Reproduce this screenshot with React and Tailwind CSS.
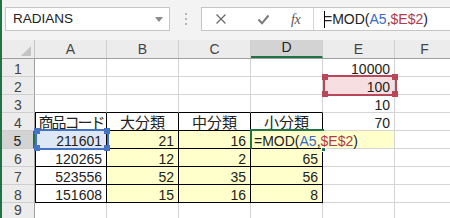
import React from 'react'

const COLS = ['A', 'B', 'C', 'D', 'E', 'F']

// row data: index 0 = row 1
const ROWS = [
  { E: '10000' },
  { E: '100' },
  { E: '10' },
  { A: '商品コード', B: '大分類', C: '中分類', D: '小分類', E: '70' },
  { A: '211601', B: '21', C: '16', D: '' },
  { A: '120265', B: '12', C: '2', D: '65' },
  { A: '523556', B: '52', C: '35', D: '56' },
  { A: '151608', B: '15', C: '16', D: '8' },
  {},
]

const TABLE = ['A', 'B', 'C', 'D']

function cellClass(r, col) {
  const inTable = r >= 4 && r <= 8 && TABLE.includes(col)
  const aboveTable = r === 3 && TABLE.includes(col)
  let cls = 'shrink-0 h-[18px] border-r border-b flex items-end leading-[14px] overflow-visible whitespace-nowrap '
  cls += col === 'F' ? 'w-[60px] ' : 'w-[72px] '
  if (inTable) cls += 'border-black '
  else if (aboveTable) cls += 'border-r-[#d4d4d4] border-b-black '
  else cls += 'border-[#d4d4d4] '
  if (inTable && col === 'A') cls += 'border-l border-l-black '
  if (r >= 5 && r <= 8 && (col === 'B' || col === 'C' || col === 'D')) cls += 'bg-[#ffffcc] '
  if (r === 5 && col === 'A') cls += 'bg-[#dde7f5] '
  if (r === 2 && col === 'E') cls += 'bg-[#f7dfe1] '
  if (r === 4 && col === 'A') cls += 'justify-center text-[15px] tracking-[-2px] '
  else if (r === 4 && TABLE.includes(col)) cls += 'justify-center text-[15px] '
  else cls += 'justify-end pr-[4px] '
  return cls
}

function Squares({ color }) {
  const sq = 'absolute w-[6px] h-[6px] ' + color
  return (
    <>
      <div className={sq + ' -left-[3px] -top-[3px]'} />
      <div className={sq + ' -right-[3px] -top-[3px]'} />
      <div className={sq + ' -left-[3px] -bottom-[3px]'} />
      <div className={sq + ' -right-[3px] -bottom-[3px]'} />
    </>
  )
}

function Formula() {
  return (
    <>
      <span>=MOD(</span>
      <span className="text-[#3a6bc4]">A5</span>
      <span>,</span>
      <span className="text-[#b0394a]">$E$2</span>
      <span>)</span>
    </>
  )
}

export default function App() {
  return (
    <div className="relative w-[450px] h-[218px] overflow-hidden bg-white border-l-2 border-[#217346] font-['Liberation_Sans','Noto_Sans_CJK_JP',sans-serif] text-[14px] text-[#222]">
      {/* formula bar */}
      <div className="h-[40px] bg-[#f3f3f3] flex items-start pt-[7px]">
        <div className="ml-[3px] w-[165px] h-[24px] bg-white border border-[#c6c6c6] flex items-center justify-between pl-[7px] pr-[6px] text-[13.5px]">
          <span>RADIANS</span>
          <svg width="8" height="5" viewBox="0 0 8 5"><path d="M0 0h8L4 5z" fill="#8a8a8a" /></svg>
        </div>
        <div className="w-[31px] h-[24px] flex flex-col items-center justify-center gap-[3px]">
          <span className="w-[2px] h-[2px] bg-[#b5b5b5]" />
          <span className="w-[2px] h-[2px] bg-[#b5b5b5]" />
          <span className="w-[2px] h-[2px] bg-[#b5b5b5]" />
        </div>
        <div className="flex-1 h-[24px] bg-white border border-[#c6c6c6] border-r-0 flex">
          <div className="w-[112px] shrink-0 border-r border-[#d4d4d4] flex items-center">
            <svg className="ml-[13px]" width="12" height="12" viewBox="0 0 12 12">
              <path d="M1.5 1.5l9 9M10.5 1.5l-9 9" stroke="#6b6b6b" strokeWidth="1.3" />
            </svg>
            <svg className="ml-[30px]" width="13" height="11" viewBox="0 0 13 11">
              <path d="M1.5 5.5l3.5 3.8L11.5 1.5" stroke="#7a7a7a" strokeWidth="2" fill="none" />
            </svg>
            <span className="ml-[21px] font-['Liberation_Serif',serif] italic text-[14px] text-[#555] tracking-[-0.5px]">fx</span>
          </div>
          <div className="flex items-center pl-[10px] relative">
            <span className="absolute left-[10px] top-[3px] w-[1px] h-[17px] bg-black" />
            <Formula />
          </div>
        </div>
      </div>

      {/* column headers */}
      <div className="flex h-[19px] bg-[#ececec] border-b border-[#a0a0a0] leading-[14px]">
        <div className="w-[33px] shrink-0 border-r border-[#c6c6c6] flex items-end justify-end pr-[3px] pb-[2px]">
          <svg width="10" height="10" viewBox="0 0 10 10"><path d="M10 0v10H0z" fill="#c4c4c4" /></svg>
        </div>
        {COLS.map((c) => (
          <div
            key={c}
            className={
              'shrink-0 flex items-end pb-[2px] justify-center border-r border-[#d0d0d0] ' +
              (c === 'F' ? 'w-[60px] ' : 'w-[72px] ') +
              (c === 'D' ? 'bg-[#d3d3d3] border-b-2 border-b-[#217346] text-[#222]' : 'text-[#444]')
            }
          >
            {c}
          </div>
        ))}
      </div>

      {/* rows */}
      {ROWS.map((row, i) => {
        const r = i + 1
        return (
          <div key={r} className="flex">
            <div
              className={
                'w-[33px] shrink-0 h-[18px] flex items-end leading-[14px] justify-center border-b border-[#cfcfcf] ' +
                (r === 5 ? 'bg-[#d3d3d3] border-r-2 border-r-[#217346] text-[#222]' : 'bg-[#ececec] border-r border-r-[#a0a0a0] text-[#444]') +
                (r === 9 ? ' pb-[3px]' : '')
              }
            >
              {r}
            </div>
            {COLS.map((c) => (
              <div key={c} className={cellClass(r, c)}>
                {row[c] ?? ''}
              </div>
            ))}
          </div>
        )
      })}

      {/* reference highlight A5 */}
      <div className="absolute left-[33px] top-[129px] w-[74px] h-[21px] border-2 border-[#4472c4]">
        <Squares color="bg-[#4472c4]" />
      </div>

      {/* reference highlight E2 */}
      <div className="absolute left-[321px] top-[75px] w-[74px] h-[21px] border-2 border-[#b8475a]">
        <Squares color="bg-[#b8475a]" />
      </div>

      {/* editing cell D5 */}
      <div className="absolute left-[249px] top-[131px] w-[143px] h-[17px] bg-[#ffffcc] flex items-end leading-[14px] pl-[3px] whitespace-nowrap">
        <Formula />
      </div>
      <div className="absolute left-[248px] top-[129px] w-[74px] h-[20px] border-t-2 border-l-2 border-[#217346]">
        <div className="absolute -right-[2px] -bottom-[3px] w-[5px] h-[5px] bg-[#217346] border border-white" />
      </div>
    </div>
  )
}
